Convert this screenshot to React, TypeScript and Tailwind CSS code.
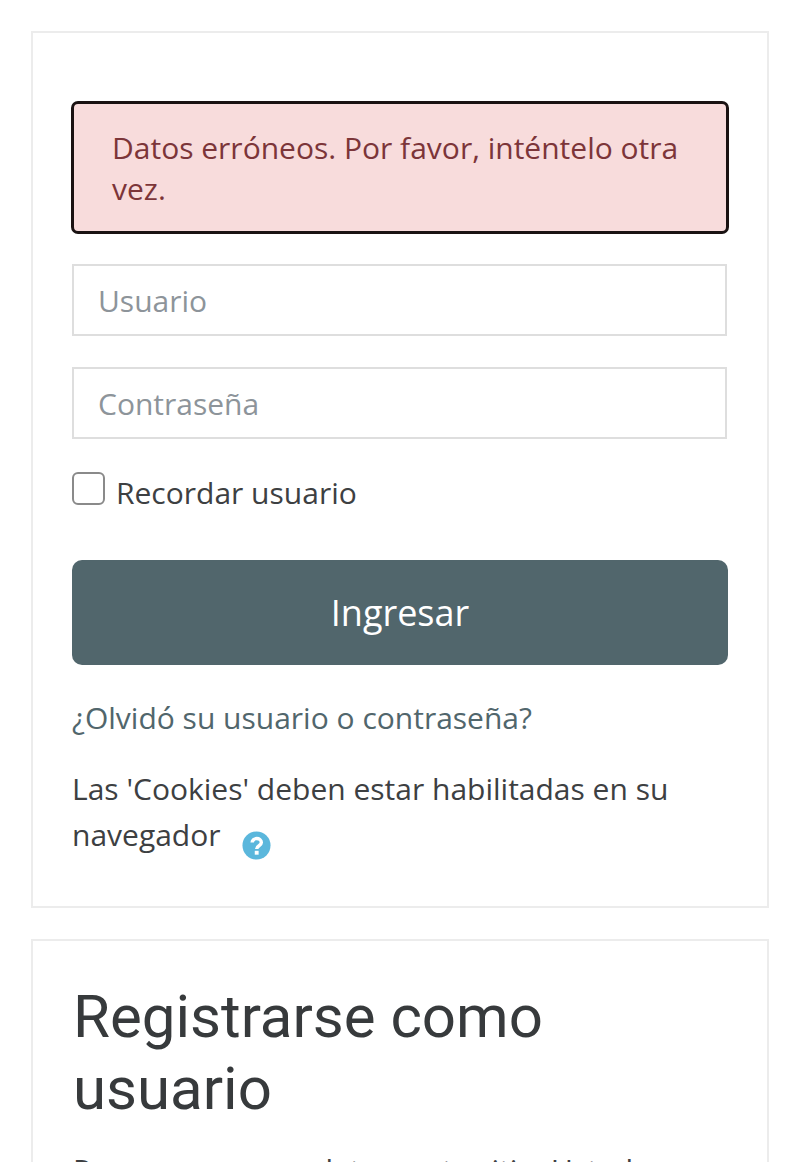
export default function App() {
  return (
    <div className="h-[1162px] overflow-hidden bg-white pt-[31px] px-[31px] font-['Open_Sans',sans-serif] text-[#3d4042]">
      <div className="border-2 border-[#ececec] h-[877px] px-[38px] pt-[68px]">
        <div className="border-[3px] border-[#1a1212] rounded-[7px] bg-[#f8dcdc] text-[#7c3539] text-[30px] leading-[41px] h-[133px] pl-[38px] pr-[40px] pt-[23px]">
          Datos erróneos. Por favor, inténtelo otra vez.
        </div>
        <div className="mt-[30px] ml-px mr-[2px] h-[72px] border-2 border-[#dedede] pl-[24px] flex items-center text-[#8d949a] text-[30px]">Usuario</div>
        <div className="mt-[31px] ml-px mr-[2px] h-[72px] border-2 border-[#dedede] pl-[24px] flex items-center text-[#8d949a] text-[30px]">Contraseña</div>
        <div className="mt-[33px] ml-px flex items-start h-[33px]">
          <div className="w-[33px] h-[33px] rounded-[6px] border-[2.5px] border-[#8a8a8a] bg-white shrink-0" />
          <span className="ml-[11px] text-[30px] leading-[41px]">Recordar usuario</span>
        </div>
        <div className="mt-[55px] ml-px mr-px h-[105px] rounded-[10px] bg-[#51666c] text-white text-[36px] flex items-center justify-center">Ingresar</div>
        <div className="mt-[32px] ml-px text-[30px] leading-[41px] text-[#51666c]">¿Olvidó su usuario o contraseña?</div>
        <div className="mt-[28px] ml-px mr-[2px] text-[30px] leading-[46px]">
          Las 'Cookies' deben estar habilitadas en su navegador
          <svg className="inline-block ml-[21px] align-[-14px]" width="29" height="29" viewBox="0 0 30 30">
            <circle cx="15" cy="15" r="14.5" fill="#5bb7dc" />
            <path d="M10.5 12 C10.5 6.5 20 6.5 20 12 C20 15.5 15.2 15 15.2 18.5" fill="none" stroke="#fff" strokeWidth="3.6" />
            <rect x="13.2" y="20.5" width="4" height="4" fill="#fff" />
          </svg>
        </div>
      </div>
      <div className="mt-[31px] border-2 border-[#ececec] h-[300px] pl-[40px] pr-[39px] pt-[40px]">
        <h2 className="font-['Roboto',sans-serif] text-[60px] leading-[72px] text-[#373a3c]">Registrarse como usuario</h2>
        <p className="mt-[24px] text-[30px] leading-[41px]">Para acceso completo a este sitio, Usted primero necesita crear una cuenta.</p>
      </div>
    </div>
  );
}
